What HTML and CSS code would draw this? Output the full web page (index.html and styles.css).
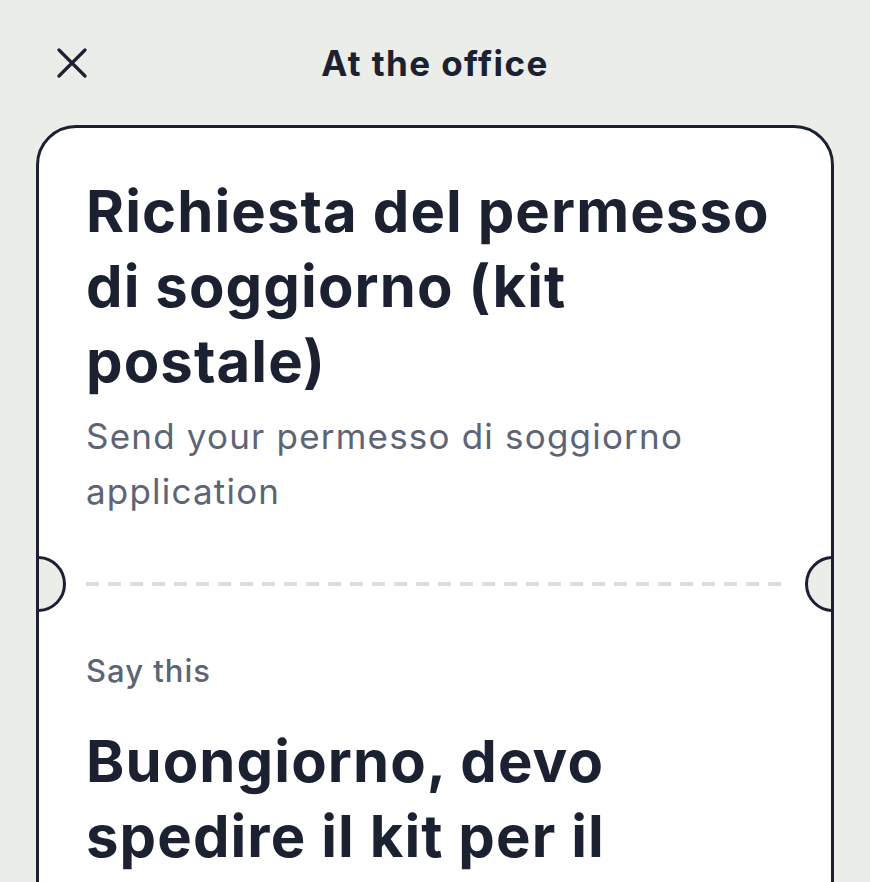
FILE: index.html
```html
<!DOCTYPE html>
<html lang="en">
<head>
<meta charset="utf-8">
<title>At the office</title>
<link rel="stylesheet" href="styles.css">
</head>
<body>
<div class="screen">
  <header class="topbar">
    <button class="close" aria-label="Close">
      <svg width="30" height="30" viewBox="0 0 30 30" fill="none" stroke="#1b2131" stroke-width="3.2" stroke-linecap="round">
        <path d="M2 2 L28 28 M28 2 L2 28"/>
      </svg>
    </button>
    <h1 class="title">At the office</h1>
  </header>
  <main class="card">
    <span class="notch notch-left"></span>
    <span class="notch notch-right"></span>
    <section class="card-top">
      <h2 class="heading">Richiesta del permesso di soggiorno (kit postale)</h2>
      <p class="subtitle">Send your permesso di soggiorno application</p>
    </section>
    <div class="divider"></div>
    <section class="card-bottom">
      <p class="label">Say this</p>
      <p class="phrase">Buongiorno, devo spedire il kit per il permesso di soggiorno.</p>
    </section>
  </main>
</div>
</body>
</html>
```
FILE: styles.css
```css
* { box-sizing: border-box; }
html, body {
  margin: 0;
  padding: 0;
  background: #eaede8;
  height: 100%;
  overflow: hidden;
}
body {
  font-family: Inter, "Noto Sans", sans-serif;
  color: #1b2131;
}
.screen {
  padding: 0 36px;
}
.topbar {
  height: 125px;
  display: flex;
  align-items: center;
}
.close {
  width: 30px;
  height: 30px;
  padding: 0;
  border: 0;
  background: none;
  margin-left: 21px;
  display: flex;
}
.title {
  flex: 1;
  text-align: center;
  margin: 0 51px 0 0;
  font-size: 35px;
  font-weight: 700;
  letter-spacing: 1.4px;
}
.card {
  position: relative;
  overflow: hidden;
  background: #ffffff;
  border: 3px solid #1b2131;
  border-radius: 40px;
  height: 800px;
}
.notch {
  position: absolute;
  top: 428px;
  width: 56px;
  height: 56px;
  border: 3px solid #1b2131;
  border-radius: 50%;
  background: #eaede8;
}
.notch-left { left: -29.5px; }
.notch-right { right: -29.5px; }
.card-top {
  padding: 46px 47px 0;
}
.heading {
  margin: 0;
  font-size: 58px;
  line-height: 75px;
  font-weight: 700;
  letter-spacing: 1.1px;
}
.subtitle {
  margin: 10px 0 0;
  font-size: 35px;
  line-height: 55px;
  color: #5d6475;
  font-weight: 400;
  letter-spacing: 1.2px;
}
.divider {
  margin: 63px 47px 0;
  height: 4px;
  background: repeating-linear-gradient(90deg, #deded8 0 13px, transparent 13px 22px);
}
.card-bottom {
  padding: 65px 47px 0;
}
.label {
  margin: 0;
  font-size: 31px;
  line-height: 40px;
  color: #5d6475;
  font-weight: 500;
  letter-spacing: 1px;
}
.phrase {
  margin: 33px 0 0;
  font-size: 58px;
  line-height: 75px;
  font-weight: 700;
  letter-spacing: 1.1px;
}
```
